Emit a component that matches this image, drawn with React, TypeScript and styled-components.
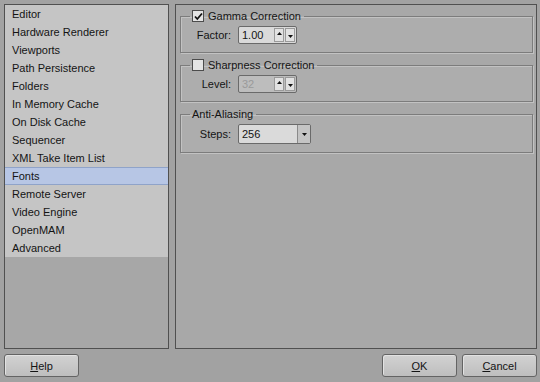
import styled, { createGlobalStyle } from 'styled-components';

const GlobalStyle = createGlobalStyle`
  html, body {
    margin: 0;
    padding: 0;
    background: #a2a2a2;
  }
  body {
    font-family: 'Liberation Sans', Arial, sans-serif;
    font-size: 11px;
    color: #141414;
  }
`;

const Dialog = styled.div`
  width: 540px;
  height: 382px;
  box-sizing: border-box;
  padding: 4px 3px 4px 4px;
  display: flex;
  flex-direction: column;
  background: #a2a2a2;
`;

const Body = styled.div`
  display: flex;
  gap: 6px;
  height: 345px;
`;

const Sidebar = styled.div`
  width: 165px;
  box-sizing: border-box;
  border: 1px solid #505050;
  background: #a7a7a7;
`;

const NavList = styled.ul`
  list-style: none;
  margin: 0;
  padding: 0;
  background: #c5c5c5;
`;

const NavItem = styled.li<{ $active?: boolean }>`
  height: 18px;
  box-sizing: border-box;
  padding-left: 7px;
  display: flex;
  align-items: center;
  border-top: 1px solid ${(p) => (p.$active ? '#8fa3c9' : 'transparent')};
  border-bottom: 1px solid ${(p) => (p.$active ? '#8fa3c9' : 'transparent')};
  background: ${(p) => (p.$active ? '#b7c6e5' : 'transparent')};
`;

const Content = styled.div`
  flex: 1;
  box-sizing: border-box;
  border: 1px solid #505050;
  background: #a8a8a8;
  padding: 4px 3px 0 4px;
  display: flex;
  flex-direction: column;
  gap: 5px;
`;

const Group = styled.fieldset`
  margin: 0;
  padding: 3px 8px 8px 9px;
  border: 1px solid #7c7c7c;
  box-shadow: inset 1px 1px 0 #c2c2c2, 1px 1px 0 #c2c2c2;
  background: #adadad;
  min-width: 0;
`;

const Legend = styled.legend`
  padding: 0 3px 0 2px;
  height: 14px;
  display: flex;
  align-items: center;
  gap: 4px;
  color: #141414;
`;

const Check = styled.span`
  width: 12px;
  height: 12px;
  box-sizing: border-box;
  border: 1px solid #4c4c4c;
  background: #e4e4e4;
  display: inline-flex;
  align-items: center;
  justify-content: center;
`;

const Row = styled.div`
  display: grid;
  grid-template-columns: 41px auto;
  column-gap: 7px;
  align-items: center;
  justify-content: start;
`;

const Label = styled.span`
  text-align: right;
`;

const Field = styled.div<{ $width: number; $height: number; $disabled?: boolean }>`
  width: ${(p) => p.$width}px;
  height: ${(p) => p.$height}px;
  box-sizing: border-box;
  border: 1px solid #6a6a6a;
  border-radius: 2px;
  background: ${(p) => (p.$disabled ? '#bdbdbd' : '#dadada')};
  color: ${(p) => (p.$disabled ? '#9a9a9a' : '#141414')};
  display: flex;
  align-items: center;
`;

const FieldText = styled.span`
  flex: 1;
  padding-left: 3px;
`;

const SpinButtons = styled.div`
  display: flex;
  height: 100%;
  padding: 1px 1px 1px 0;
  box-sizing: border-box;
  gap: 1px;
`;

const SpinBtn = styled.div<{ $down?: boolean }>`
  width: 10px;
  background: #e2e2e2;
  border: 1px solid #9a9a9a;
  box-sizing: border-box;
  display: flex;
  justify-content: center;
  align-items: ${(p) => (p.$down ? 'flex-end' : 'flex-start')};
  padding: 3px 0;
`;

const DropBtn = styled.div`
  width: 12px;
  height: 100%;
  border-left: 1px solid #8a8a8a;
  background: #c4c4c4;
  display: flex;
  align-items: center;
  justify-content: center;
`;

const Footer = styled.div`
  display: flex;
  align-items: center;
  margin-top: 5px;
  gap: 5px;
`;

const Spacer = styled.div`
  flex: 1;
`;

const Button = styled.button`
  width: 75px;
  height: 23px;
  font: inherit;
  color: #141414;
  border: 1px solid #646464;
  border-radius: 3px;
  background: linear-gradient(#d2d2d2, #bebebe);
  box-shadow: inset 1px 1px 0 #e2e2e2;
  padding: 0;
  u {
    text-decoration: underline;
  }
`;

const Arrow = ({ down }: { down?: boolean }) => (
  <svg width="5" height="3" viewBox="0 0 5 3">
    <path d={down ? 'M0 0h5L2.5 3z' : 'M0 3h5L2.5 0z'} fill="#111" />
  </svg>
);

const items = [
  'Editor',
  'Hardware Renderer',
  'Viewports',
  'Path Persistence',
  'Folders',
  'In Memory Cache',
  'On Disk Cache',
  'Sequencer',
  'XML Take Item List',
  'Fonts',
  'Remote Server',
  'Video Engine',
  'OpenMAM',
  'Advanced',
];

const Spin = ({ value, disabled }: { value: string; disabled?: boolean }) => (
  <Field $width={59} $height={18} $disabled={disabled}>
    <FieldText>{value}</FieldText>
    <SpinButtons>
      <SpinBtn>
        <Arrow />
      </SpinBtn>
      <SpinBtn $down>
        <Arrow down />
      </SpinBtn>
    </SpinButtons>
  </Field>
);

export default function App() {
  return (
    <>
      <GlobalStyle />
      <Dialog>
        <Body>
          <Sidebar>
            <NavList>
              {items.map((it) => (
                <NavItem key={it} $active={it === 'Fonts'}>
                  {it}
                </NavItem>
              ))}
            </NavList>
          </Sidebar>
          <Content>
            <Group>
              <Legend>
                <Check>
                  <svg width="9" height="9" viewBox="0 0 9 9">
                    <path d="M1 4.5l2.3 2.5L8 1.5" stroke="#111" strokeWidth="1.8" fill="none" />
                  </svg>
                </Check>
                Gamma Correction
              </Legend>
              <Row>
                <Label>Factor:</Label>
                <Spin value="1.00" />
              </Row>
            </Group>
            <Group>
              <Legend>
                <Check />
                Sharpness Correction
              </Legend>
              <Row>
                <Label>Level:</Label>
                <Spin value="32" disabled />
              </Row>
            </Group>
            <Group>
              <Legend>Anti-Aliasing</Legend>
              <Row>
                <Label>Steps:</Label>
                <Field $width={73} $height={20}>
                  <FieldText>256</FieldText>
                  <DropBtn>
                    <Arrow down />
                  </DropBtn>
                </Field>
              </Row>
            </Group>
          </Content>
        </Body>
        <Footer>
          <Button>
            <u>H</u>elp
          </Button>
          <Spacer />
          <Button>
            <u>O</u>K
          </Button>
          <Button>
            <u>C</u>ancel
          </Button>
        </Footer>
      </Dialog>
    </>
  );
}
